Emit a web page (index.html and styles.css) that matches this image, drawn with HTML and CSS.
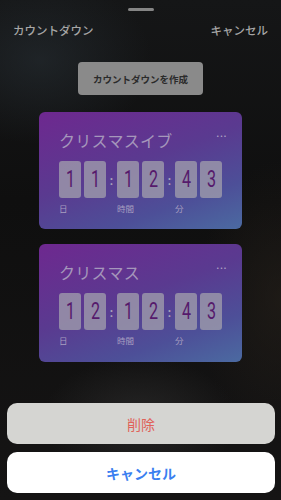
FILE: index.html
```html
<!DOCTYPE html>
<html lang="ja">
<head>
<meta charset="utf-8">
<link rel="stylesheet" href="styles.css">
</head>
<body>
<div class="screen">
  <div class="handle"></div>
  <div class="header">
    <span class="title">カウントダウン</span>
    <span class="cancel-link">キャンセル</span>
  </div>
  <div class="create-wrap"><div class="create">カウントダウンを作成</div></div>
  <div class="cards">
    <div class="card">
      <div class="card-head"><span class="card-title">クリスマスイブ</span><span class="dots">•••</span></div>
      <div class="timer">
        <div class="pair"><span class="box"><span class="d">1</span></span><span class="box"><span class="d">1</span></span></div>
        <span class="colon">:</span>
        <div class="pair"><span class="box"><span class="d">1</span></span><span class="box"><span class="d">2</span></span></div>
        <span class="colon">:</span>
        <div class="pair"><span class="box"><span class="d">4</span></span><span class="box"><span class="d">3</span></span></div>
        <span class="lbl">日</span><span></span><span class="lbl">時間</span><span></span><span class="lbl">分</span>
      </div>
    </div>
    <div class="card">
      <div class="card-head"><span class="card-title">クリスマス</span><span class="dots">•••</span></div>
      <div class="timer">
        <div class="pair"><span class="box"><span class="d">1</span></span><span class="box"><span class="d">2</span></span></div>
        <span class="colon">:</span>
        <div class="pair"><span class="box"><span class="d">1</span></span><span class="box"><span class="d">2</span></span></div>
        <span class="colon">:</span>
        <div class="pair"><span class="box"><span class="d">4</span></span><span class="box"><span class="d">3</span></span></div>
        <span class="lbl">日</span><span></span><span class="lbl">時間</span><span></span><span class="lbl">分</span>
      </div>
    </div>
  </div>
  <div class="sheet">
    <div class="btn delete">削除</div>
    <div class="btn cancel">キャンセル</div>
  </div>
</div>
</body>
</html>
```

FILE: styles.css
```css
html, body {
  margin: 0;
  padding: 0;
}
body {
  width: 281px;
  height: 500px;
  overflow: hidden;
  font-family: "Noto Sans CJK JP", "Noto Sans", sans-serif;
  background: #131313;
}
.screen {
  width: 281px;
  height: 500px;
  box-sizing: border-box;
  padding-top: 8px;
  display: flex;
  flex-direction: column;
  background:
    radial-gradient(ellipse 160px 120px at 40px 60px, rgba(40,48,54,0.55), rgba(0,0,0,0) 70%),
    radial-gradient(ellipse 140px 90px at 140px 420px, rgba(50,50,50,0.6), rgba(0,0,0,0) 70%),
    radial-gradient(ellipse 120px 200px at 281px 300px, rgba(38,32,26,0.6), rgba(0,0,0,0) 70%),
    linear-gradient(180deg, #151617 0%, #0f0f0f 40%, #151414 100%);
}
.handle {
  align-self: center;
  width: 26px;
  height: 3px;
  border-radius: 2px;
  background: #858585;
}
.header {
  display: flex;
  justify-content: space-between;
  align-items: center;
  padding: 0 13px 0 13px;
  margin-top: 9px;
  height: 20px;
  font-size: 11.5px;
  font-weight: 500;
  color: #a6a6a6;
  line-height: 20px;
}
.create-wrap {
  display: flex;
  justify-content: center;
  margin-top: 22px;
}
.create {
  width: 125px;
  height: 33px;
  border-radius: 4px;
  background: #8a8a8a;
  color: #2b2b2b;
  font-size: 9.5px;
  font-weight: 700;
  display: flex;
  align-items: center;
  justify-content: center;
}
.cards {
  display: flex;
  flex-direction: column;
  align-items: center;
  gap: 15px;
  margin-top: 17px;
}
.card {
  width: 203px;
  height: 117px;
  box-sizing: border-box;
  border-radius: 6px;
  padding: 17px 15px 0 20px;
  background: linear-gradient(160deg, #6e288f 0%, #5a3a90 45%, #4d4f98 75%, #4b6aa1 100%);
}
.card + .card {
  height: 118px;
}
.card-head {
  display: flex;
  justify-content: space-between;
  align-items: center;
  height: 22px;
}
.card-title {
  font-size: 16px;
  color: #a597bb;
  letter-spacing: 0.3px;
  line-height: 22px;
}
.dots {
  font-family: "DejaVu Sans", sans-serif;
  font-size: 5px;
  color: #c2bcd2;
  letter-spacing: 0.6px;
  line-height: 6px;
  margin-top: -8px;
}
.timer {
  display: grid;
  grid-template-columns: 47px 11px 47px 11px 47px;
  grid-template-rows: 37px auto;
  margin-top: 10px;
}
.pair {
  display: flex;
  gap: 3px;
}
.box {
  width: 22px;
  height: 37px;
  border-radius: 3px;
  background: rgba(160,158,172,0.78);
  display: flex;
  align-items: center;
  justify-content: center;
}
.d {
  display: inline-block;
  font-family: "Roboto", "Liberation Sans", sans-serif;
  font-size: 23px;
  font-weight: 400;
  color: #561a6c;
  transform: scaleX(0.7);
  line-height: 1;
}
.colon {
  display: flex;
  align-items: center;
  justify-content: center;
  font-family: "Roboto", sans-serif;
  font-size: 12px;
  font-weight: 700;
  color: #a8a3bb;
  padding-top: 2px;
}
.lbl {
  font-size: 8.5px;
  color: #a89fc0;
  line-height: 12px;
  margin-top: 4px;
}
.sheet {
  margin-top: auto;
  padding: 0 6px 7px 7px;
  display: flex;
  flex-direction: column;
  gap: 8px;
}
.btn {
  height: 41px;
  border-radius: 10px;
  display: flex;
  align-items: center;
  justify-content: center;
  font-size: 14px;
}
.delete {
  background: #d5d5d2;
  color: #e0625a;
}
.cancel {
  background: #ffffff;
  color: #3b7ff0;
  font-weight: 700;
}
```
